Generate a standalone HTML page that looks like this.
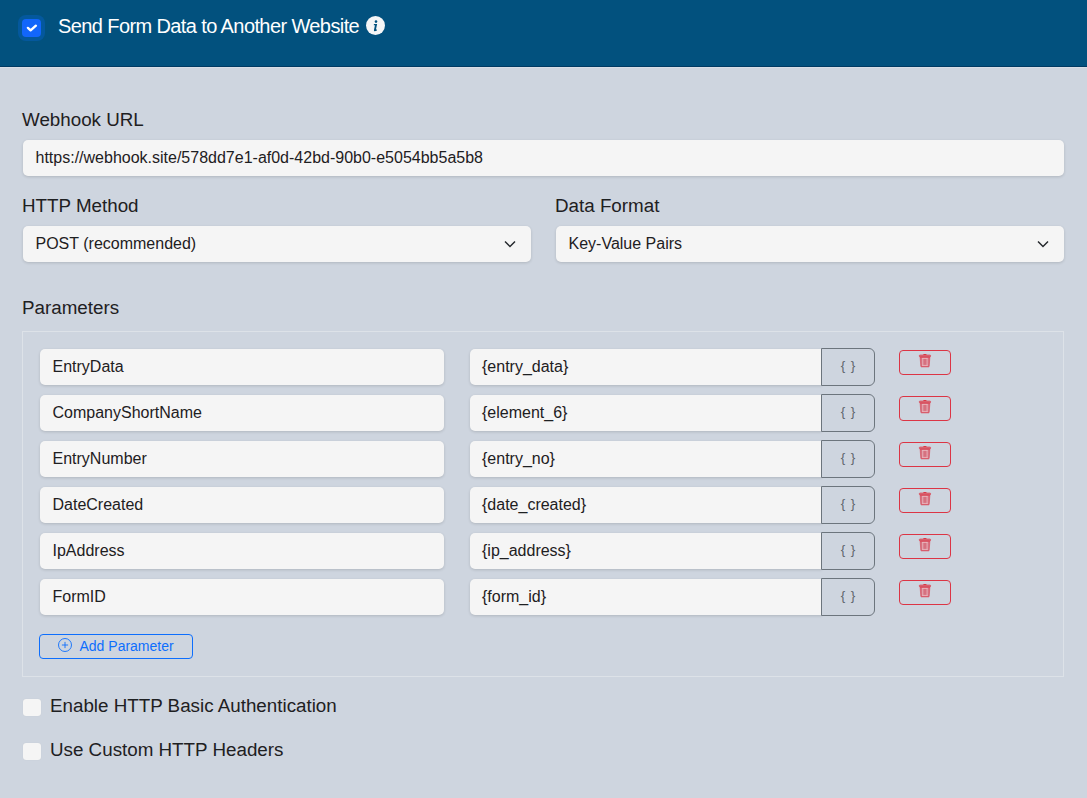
<!DOCTYPE html>
<html><head><meta charset="utf-8">
<style>
*{box-sizing:border-box;margin:0;padding:0}
html,body{width:1087px;height:798px;overflow:hidden}
body{background:#ced5df;font-family:"Liberation Sans",sans-serif;color:#1e2022;position:relative}
.hdr{position:absolute;left:0;top:0;width:1087px;height:67px;background:#02517e;border-bottom:1px solid #003a63}
.hdr-line{position:absolute;left:0;top:67px;width:1087px;height:1px;background:#d9dee6}
.cb{position:absolute;left:22px;top:19px;width:19px;height:18px;background:#1266fb;border-radius:4px;box-shadow:0 0 0 4px rgba(13,110,253,.25)}
.cb svg{position:absolute;left:0;top:0}
.title{position:absolute;left:58px;top:14.4px;font-size:20px;letter-spacing:-0.6px;line-height:24px;color:#fff;white-space:nowrap}
.info{position:absolute;left:366.3px;top:16px;width:19px;height:19px;border-radius:50%;background:#f5f6f7}
.info svg{position:absolute;left:0;top:0}
.lbl{position:absolute;font-size:18.8px;line-height:22px;white-space:nowrap;color:#1e2022}
.inp{position:absolute;height:36.4px;background:#f5f5f5;border-radius:5px;box-shadow:0 1px 3px rgba(0,0,0,.15);font-size:16px;line-height:35px;padding-left:13px;white-space:nowrap;color:#1e2022}
.chev{position:absolute;right:15px;top:14px}
.box{position:absolute;left:22px;top:331px;width:1042px;height:346px;border:1px solid #dde2e8}
.vbtn{position:absolute;width:54px;height:37.5px;border:1px solid #6c757d;border-radius:0 6px 6px 0;background:#ced5df;font-size:13.5px;line-height:33px;text-align:center;color:#5f666d;word-spacing:1.7px}
.del{position:absolute;width:52px;height:25px;border:1px solid #dc3545;border-radius:4px}
.del svg{position:absolute;left:18px;top:2px}
.add{position:absolute;left:38.5px;top:634px;width:154px;height:25px;border:1px solid #0d6efd;border-radius:4px;color:#0d6efd;font-size:14px;line-height:23px;white-space:nowrap}
.add svg{position:absolute;left:18px;top:3px}
.add span{position:absolute;left:40px;top:0}
.ucb{position:absolute;left:22.5px;width:18px;height:17px;background:#f5f5f5;border-radius:3px;box-shadow:0 0 1px rgba(0,0,0,.1)}
</style></head><body>
<div class="hdr"></div>
<div class="hdr-line"></div>
<div class="cb"><svg width="19" height="18" viewBox="0 0 19 18"><path d="M5.9 8.9 L8.6 11.3 L13.9 6.7" fill="none" stroke="#fff" stroke-width="2.4" stroke-linecap="round" stroke-linejoin="round"/></svg></div>
<div class="title">Send Form Data to Another Website</div>
<div class="info"><svg width="19" height="19" viewBox="-0.5 -0.2 19 19"><circle cx="9.5" cy="5.4" r="1.3" fill="#02517e"/><path d="M 7.45 7.80 H 10.65 L 9.55 12.90 Q 9.45 13.60 10.35 13.30 L 10.25 14.50 Q 9.25 14.95 8.25 14.95 Q 7.15 14.90 7.45 13.70 L 8.45 9.00 H 7.25 Z" fill="#02517e"/></svg></div>

<div class="lbl" style="left:22px;top:109px">Webhook URL</div>
<div class="inp" style="left:22.5px;top:139.8px;width:1041px">https://webhook.site/578dd7e1-af0d-42bd-90b0-e5054bb5a5b8</div>

<div class="lbl" style="left:22px;top:195px">HTTP Method</div>
<div class="inp" style="left:22.5px;top:225.7px;width:508px;height:36.8px">POST (recommended)<svg class="chev" width="12" height="8" viewBox="0 0 12 8"><path d="M1 1.5 L6 6.5 L11 1.5" fill="none" stroke="#26292d" stroke-width="1.45"/></svg></div>
<div class="lbl" style="left:555px;top:195px">Data Format</div>
<div class="inp" style="left:555.5px;top:225.7px;width:508px;height:36.8px">Key-Value Pairs<svg class="chev" width="12" height="8" viewBox="0 0 12 8"><path d="M1 1.5 L6 6.5 L11 1.5" fill="none" stroke="#26292d" stroke-width="1.45"/></svg></div>

<div class="lbl" style="left:22px;top:297px">Parameters</div>
<div class="box"></div>


<div class="add"><svg width="14" height="14" viewBox="0 0 14 14"><circle cx="7" cy="7" r="6.5" fill="none" stroke="#0d6efd" stroke-width="0.9"/><path d="M7 3.9V10.1M3.9 7H10.1" stroke="#0d6efd" stroke-width="0.9"/></svg><span>Add Parameter</span></div>

<div class="ucb" style="top:698.6px"></div>
<div class="lbl" style="left:50px;top:694.7px">Enable HTTP Basic Authentication</div>
<div class="ucb" style="top:742.6px"></div>
<div class="lbl" style="left:50px;top:738.7px">Use Custom HTTP Headers</div>

<!-- rows -->
<div class="inp" style="left:39.5px;top:349px;width:404.6px">EntryData</div>
<div class="inp" style="left:470px;top:349px;width:352px;border-radius:5px 0 0 5px;padding-left:12px">{entry_data}</div>
<div class="vbtn" style="left:821px;top:348px">{ }</div>
<div class="del" style="left:899px;top:350px"><svg width="14" height="15" viewBox="0 0 14 15"><path d="M5.1 2.1Q5.1 0.9 6.4 0.9H7.4Q8.7 0.9 8.7 2.1Z" fill="#dc3545"/><rect x="1.2" y="2" width="11.5" height="1.9" rx="0.95" fill="#dc3545" fill-opacity="0.6" stroke="#dc3545" stroke-width="0.6"/><path d="M2.1 4.1H11.9L11.2 13.3Q11.1 13.9 10.5 13.9H3.5Q2.9 13.9 2.8 13.3Z" fill="#dc3545" fill-opacity="0.62" stroke="#dc3545" stroke-width="0.5"/><path d="M4.2 5.4H9.7M4.1 12.4H9.8M4.75 5.4V12.4M9.1 5.4V12.4" stroke="#f4dde0" stroke-width="0.6"/></svg></div>
<div class="inp" style="left:39.5px;top:395px;width:404.6px">CompanyShortName</div>
<div class="inp" style="left:470px;top:395px;width:352px;border-radius:5px 0 0 5px;padding-left:12px">{element_6}</div>
<div class="vbtn" style="left:821px;top:394px">{ }</div>
<div class="del" style="left:899px;top:396px"><svg width="14" height="15" viewBox="0 0 14 15"><path d="M5.1 2.1Q5.1 0.9 6.4 0.9H7.4Q8.7 0.9 8.7 2.1Z" fill="#dc3545"/><rect x="1.2" y="2" width="11.5" height="1.9" rx="0.95" fill="#dc3545" fill-opacity="0.6" stroke="#dc3545" stroke-width="0.6"/><path d="M2.1 4.1H11.9L11.2 13.3Q11.1 13.9 10.5 13.9H3.5Q2.9 13.9 2.8 13.3Z" fill="#dc3545" fill-opacity="0.62" stroke="#dc3545" stroke-width="0.5"/><path d="M4.2 5.4H9.7M4.1 12.4H9.8M4.75 5.4V12.4M9.1 5.4V12.4" stroke="#f4dde0" stroke-width="0.6"/></svg></div>
<div class="inp" style="left:39.5px;top:441px;width:404.6px">EntryNumber</div>
<div class="inp" style="left:470px;top:441px;width:352px;border-radius:5px 0 0 5px;padding-left:12px">{entry_no}</div>
<div class="vbtn" style="left:821px;top:440px">{ }</div>
<div class="del" style="left:899px;top:442px"><svg width="14" height="15" viewBox="0 0 14 15"><path d="M5.1 2.1Q5.1 0.9 6.4 0.9H7.4Q8.7 0.9 8.7 2.1Z" fill="#dc3545"/><rect x="1.2" y="2" width="11.5" height="1.9" rx="0.95" fill="#dc3545" fill-opacity="0.6" stroke="#dc3545" stroke-width="0.6"/><path d="M2.1 4.1H11.9L11.2 13.3Q11.1 13.9 10.5 13.9H3.5Q2.9 13.9 2.8 13.3Z" fill="#dc3545" fill-opacity="0.62" stroke="#dc3545" stroke-width="0.5"/><path d="M4.2 5.4H9.7M4.1 12.4H9.8M4.75 5.4V12.4M9.1 5.4V12.4" stroke="#f4dde0" stroke-width="0.6"/></svg></div>
<div class="inp" style="left:39.5px;top:487px;width:404.6px">DateCreated</div>
<div class="inp" style="left:470px;top:487px;width:352px;border-radius:5px 0 0 5px;padding-left:12px">{date_created}</div>
<div class="vbtn" style="left:821px;top:486px">{ }</div>
<div class="del" style="left:899px;top:488px"><svg width="14" height="15" viewBox="0 0 14 15"><path d="M5.1 2.1Q5.1 0.9 6.4 0.9H7.4Q8.7 0.9 8.7 2.1Z" fill="#dc3545"/><rect x="1.2" y="2" width="11.5" height="1.9" rx="0.95" fill="#dc3545" fill-opacity="0.6" stroke="#dc3545" stroke-width="0.6"/><path d="M2.1 4.1H11.9L11.2 13.3Q11.1 13.9 10.5 13.9H3.5Q2.9 13.9 2.8 13.3Z" fill="#dc3545" fill-opacity="0.62" stroke="#dc3545" stroke-width="0.5"/><path d="M4.2 5.4H9.7M4.1 12.4H9.8M4.75 5.4V12.4M9.1 5.4V12.4" stroke="#f4dde0" stroke-width="0.6"/></svg></div>
<div class="inp" style="left:39.5px;top:533px;width:404.6px">IpAddress</div>
<div class="inp" style="left:470px;top:533px;width:352px;border-radius:5px 0 0 5px;padding-left:12px">{ip_address}</div>
<div class="vbtn" style="left:821px;top:532px">{ }</div>
<div class="del" style="left:899px;top:534px"><svg width="14" height="15" viewBox="0 0 14 15"><path d="M5.1 2.1Q5.1 0.9 6.4 0.9H7.4Q8.7 0.9 8.7 2.1Z" fill="#dc3545"/><rect x="1.2" y="2" width="11.5" height="1.9" rx="0.95" fill="#dc3545" fill-opacity="0.6" stroke="#dc3545" stroke-width="0.6"/><path d="M2.1 4.1H11.9L11.2 13.3Q11.1 13.9 10.5 13.9H3.5Q2.9 13.9 2.8 13.3Z" fill="#dc3545" fill-opacity="0.62" stroke="#dc3545" stroke-width="0.5"/><path d="M4.2 5.4H9.7M4.1 12.4H9.8M4.75 5.4V12.4M9.1 5.4V12.4" stroke="#f4dde0" stroke-width="0.6"/></svg></div>
<div class="inp" style="left:39.5px;top:579px;width:404.6px">FormID</div>
<div class="inp" style="left:470px;top:579px;width:352px;border-radius:5px 0 0 5px;padding-left:12px">{form_id}</div>
<div class="vbtn" style="left:821px;top:578px">{ }</div>
<div class="del" style="left:899px;top:580px"><svg width="14" height="15" viewBox="0 0 14 15"><path d="M5.1 2.1Q5.1 0.9 6.4 0.9H7.4Q8.7 0.9 8.7 2.1Z" fill="#dc3545"/><rect x="1.2" y="2" width="11.5" height="1.9" rx="0.95" fill="#dc3545" fill-opacity="0.6" stroke="#dc3545" stroke-width="0.6"/><path d="M2.1 4.1H11.9L11.2 13.3Q11.1 13.9 10.5 13.9H3.5Q2.9 13.9 2.8 13.3Z" fill="#dc3545" fill-opacity="0.62" stroke="#dc3545" stroke-width="0.5"/><path d="M4.2 5.4H9.7M4.1 12.4H9.8M4.75 5.4V12.4M9.1 5.4V12.4" stroke="#f4dde0" stroke-width="0.6"/></svg></div>
</body></html>
